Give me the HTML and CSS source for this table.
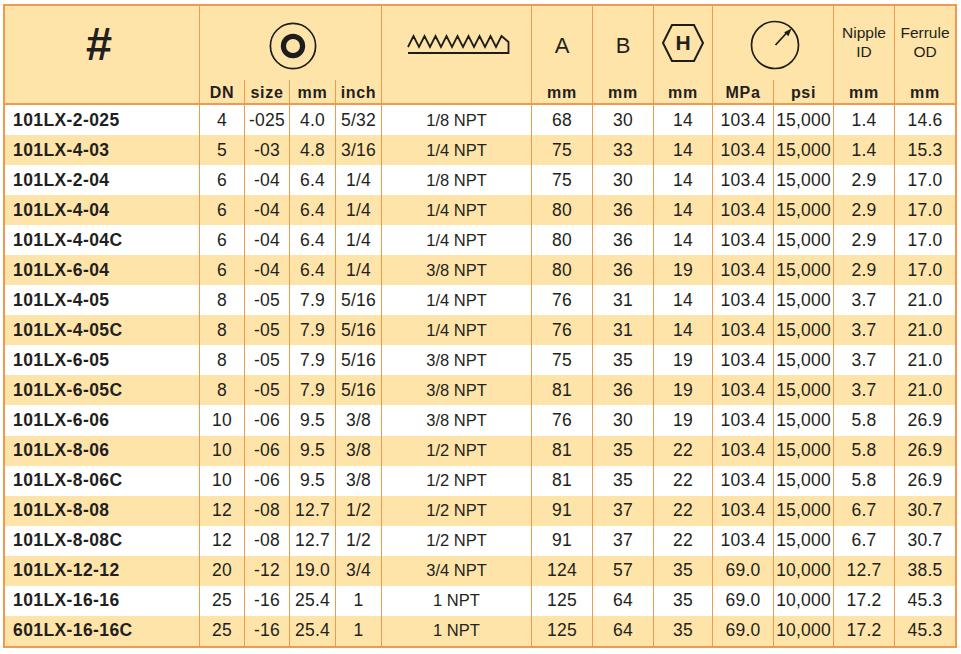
FILE: index.html
```html
<!DOCTYPE html>
<html lang="en">
<head>
<meta charset="utf-8">
<title>101LX fittings</title>
<link rel="stylesheet" href="styles.css">
</head>
<body>
<div class="page">
<table class="spec">
<colgroup>
<col class="c-code"><col class="c45"><col class="c45"><col class="c46"><col class="c46"><col class="c-thr">
<col class="c61"><col class="c61"><col class="c59"><col class="c61"><col class="c60"><col class="c61"><col class="c61">
</colgroup>
<thead>
<tr class="h1">
<th class="hash">#</th>
<th colspan="4" class="ic">
<svg class="ico-ring" width="50" height="50" viewBox="0 0 50 50"><circle cx="25" cy="25" r="22.6" fill="none" stroke="#1d1d1b" stroke-width="1.7"/><circle cx="25" cy="25" r="9.6" fill="none" stroke="#1d1d1b" stroke-width="5.2"/></svg>
</th>
<th class="ic">
<svg class="ico-thread" width="106" height="24" viewBox="0 0 106 24"><path d="M1 15 L6.5 4 L12 15 L17.5 4 L23 15 L28.5 4 L34 15 L39.5 4 L45 15 L50.5 4 L56 15 L61.5 4 L67 15 L72.5 4 L78 15 L83.5 4 L89 15 L94.5 4 L101.5 10 L101.5 21 L1 21" fill="none" stroke="#1d1d1b" stroke-width="1.8" stroke-linejoin="miter"/></svg>
</th>
<th class="big">A</th>
<th class="big">B</th>
<th class="ic">
<span class="hex"><svg width="44" height="40" viewBox="0 0 44 40"><polygon points="2,20 11,2 33,2 42,20 33,38 11,38" fill="none" stroke="#1d1d1b" stroke-width="2"/></svg><span class="hex-h">H</span></span>
</th>
<th colspan="2" class="ic">
<svg class="ico-gauge" width="52" height="52" viewBox="0 0 52 52"><circle cx="26" cy="26" r="23.5" fill="none" stroke="#1d1d1b" stroke-width="1.7"/><line x1="26.5" y1="26" x2="38" y2="13.5" stroke="#1d1d1b" stroke-width="1.8"/><polygon points="42.6,9.4 35.2,13.2 39.4,17.2" fill="#1d1d1b"/></svg>
</th>
<th class="two">Nipple<br>ID</th>
<th class="two">Ferrule<br>OD</th>
</tr>
<tr class="h2">
<th></th>
<th>DN</th><th>size</th><th>mm</th><th>inch</th>
<th></th>
<th>mm</th><th>mm</th><th>mm</th><th>MPa</th><th>psi</th><th>mm</th><th>mm</th>
</tr>
</thead>
<tbody>
<tr><td>101LX-2-025</td><td>4</td><td>-025</td><td>4.0</td><td>5/32</td><td>1/8 NPT</td><td>68</td><td>30</td><td>14</td><td>103.4</td><td>15,000</td><td>1.4</td><td>14.6</td></tr>
<tr><td>101LX-4-03</td><td>5</td><td>-03</td><td>4.8</td><td>3/16</td><td>1/4 NPT</td><td>75</td><td>33</td><td>14</td><td>103.4</td><td>15,000</td><td>1.4</td><td>15.3</td></tr>
<tr><td>101LX-2-04</td><td>6</td><td>-04</td><td>6.4</td><td>1/4</td><td>1/8 NPT</td><td>75</td><td>30</td><td>14</td><td>103.4</td><td>15,000</td><td>2.9</td><td>17.0</td></tr>
<tr><td>101LX-4-04</td><td>6</td><td>-04</td><td>6.4</td><td>1/4</td><td>1/4 NPT</td><td>80</td><td>36</td><td>14</td><td>103.4</td><td>15,000</td><td>2.9</td><td>17.0</td></tr>
<tr><td>101LX-4-04C</td><td>6</td><td>-04</td><td>6.4</td><td>1/4</td><td>1/4 NPT</td><td>80</td><td>36</td><td>14</td><td>103.4</td><td>15,000</td><td>2.9</td><td>17.0</td></tr>
<tr><td>101LX-6-04</td><td>6</td><td>-04</td><td>6.4</td><td>1/4</td><td>3/8 NPT</td><td>80</td><td>36</td><td>19</td><td>103.4</td><td>15,000</td><td>2.9</td><td>17.0</td></tr>
<tr><td>101LX-4-05</td><td>8</td><td>-05</td><td>7.9</td><td>5/16</td><td>1/4 NPT</td><td>76</td><td>31</td><td>14</td><td>103.4</td><td>15,000</td><td>3.7</td><td>21.0</td></tr>
<tr><td>101LX-4-05C</td><td>8</td><td>-05</td><td>7.9</td><td>5/16</td><td>1/4 NPT</td><td>76</td><td>31</td><td>14</td><td>103.4</td><td>15,000</td><td>3.7</td><td>21.0</td></tr>
<tr><td>101LX-6-05</td><td>8</td><td>-05</td><td>7.9</td><td>5/16</td><td>3/8 NPT</td><td>75</td><td>35</td><td>19</td><td>103.4</td><td>15,000</td><td>3.7</td><td>21.0</td></tr>
<tr><td>101LX-6-05C</td><td>8</td><td>-05</td><td>7.9</td><td>5/16</td><td>3/8 NPT</td><td>81</td><td>36</td><td>19</td><td>103.4</td><td>15,000</td><td>3.7</td><td>21.0</td></tr>
<tr><td>101LX-6-06</td><td>10</td><td>-06</td><td>9.5</td><td>3/8</td><td>3/8 NPT</td><td>76</td><td>30</td><td>19</td><td>103.4</td><td>15,000</td><td>5.8</td><td>26.9</td></tr>
<tr><td>101LX-8-06</td><td>10</td><td>-06</td><td>9.5</td><td>3/8</td><td>1/2 NPT</td><td>81</td><td>35</td><td>22</td><td>103.4</td><td>15,000</td><td>5.8</td><td>26.9</td></tr>
<tr><td>101LX-8-06C</td><td>10</td><td>-06</td><td>9.5</td><td>3/8</td><td>1/2 NPT</td><td>81</td><td>35</td><td>22</td><td>103.4</td><td>15,000</td><td>5.8</td><td>26.9</td></tr>
<tr><td>101LX-8-08</td><td>12</td><td>-08</td><td>12.7</td><td>1/2</td><td>1/2 NPT</td><td>91</td><td>37</td><td>22</td><td>103.4</td><td>15,000</td><td>6.7</td><td>30.7</td></tr>
<tr><td>101LX-8-08C</td><td>12</td><td>-08</td><td>12.7</td><td>1/2</td><td>1/2 NPT</td><td>91</td><td>37</td><td>22</td><td>103.4</td><td>15,000</td><td>6.7</td><td>30.7</td></tr>
<tr><td>101LX-12-12</td><td>20</td><td>-12</td><td>19.0</td><td>3/4</td><td>3/4 NPT</td><td>124</td><td>57</td><td>35</td><td>69.0</td><td>10,000</td><td>12.7</td><td>38.5</td></tr>
<tr><td>101LX-16-16</td><td>25</td><td>-16</td><td>25.4</td><td>1</td><td>1 NPT</td><td>125</td><td>64</td><td>35</td><td>69.0</td><td>10,000</td><td>17.2</td><td>45.3</td></tr>
<tr><td>601LX-16-16C</td><td>25</td><td>-16</td><td>25.4</td><td>1</td><td>1 NPT</td><td>125</td><td>64</td><td>35</td><td>69.0</td><td>10,000</td><td>17.2</td><td>45.3</td></tr>
</tbody>
</table>
</div>
</body>
</html>
```
FILE: styles.css
```css
html, body {
  margin: 0;
  padding: 0;
  background: #ffffff;
}

.page {
  padding: 4px 0 0 3px;
}

.spec {
  border-collapse: separate;
  border-spacing: 0;
  table-layout: fixed;
  width: 954px;
  border: 2px solid #ef9a4e;
  font-family: "Liberation Sans", Arial, sans-serif;
  color: #231f20;
}

.c-code { width: 194px; }
.c45 { width: 45px; }
.c46 { width: 46px; }
.c-thr { width: 150px; }
.c59 { width: 59px; }
.c60 { width: 60px; }
.c61 { width: 61px; }

.spec th,
.spec td {
  padding: 0;
  border-left: 1.5px solid #ef9a4e;
  text-align: center;
  white-space: nowrap;
  overflow: hidden;
}

.spec th:first-child,
.spec td:first-child {
  border-left: none;
}

.spec thead th {
  background: #fee4a8;
}

.spec tr.h1 {
  height: 74px;
}

.h1 th {
  vertical-align: middle;
  font-weight: normal;
}

.h1 .hash {
  font-size: 47px;
  font-weight: bold;
  line-height: 1;
  padding-right: 6px;
}

.h1 .ic svg {
  display: block;
  margin: 0 auto;
}

.ico-ring { position: relative; top: 3px; left: 2px; }
.ico-thread { position: relative; top: 1px; left: 3px; }
.ico-gauge { position: relative; top: 2px; left: 2px; }

.hex {
  position: relative;
  display: block;
  width: 44px;
  height: 40px;
  margin: 0 auto;
}

.hex svg {
  display: block;
}

.hex-h {
  position: absolute;
  left: 0;
  right: 0;
  top: 8px;
  font-size: 21px;
  font-weight: bold;
  line-height: 24px;
  text-align: center;
}

.h1 .big {
  font-size: 22px;
  padding-top: 5px;
}

.h1 .two {
  font-size: 15.5px;
  line-height: 18.5px;
  vertical-align: top;
  padding-top: 18px;
}

.spec tr.h2 {
  height: 25px;
}

.h2 th {
  font-size: 16px;
  font-weight: bold;
  letter-spacing: 0.7px;
  line-height: 17px;
  vertical-align: bottom;
  padding-bottom: 2px;
  border-bottom: 2px solid #ef9a4e;
}

.spec tbody tr {
  height: 30.06px;
}

.spec tbody tr:nth-child(even) td {
  background: #fee4a8;
}

.spec td {
  font-size: 17.5px;
  letter-spacing: 0.2px;
  vertical-align: middle;
}

.spec td:nth-child(6) {
  font-size: 16.5px;
  letter-spacing: 0;
}

.spec td:first-child {
  text-align: left;
  padding-left: 8px;
  font-weight: bold;
  font-size: 17.5px;
  letter-spacing: 0.4px;
}
```
